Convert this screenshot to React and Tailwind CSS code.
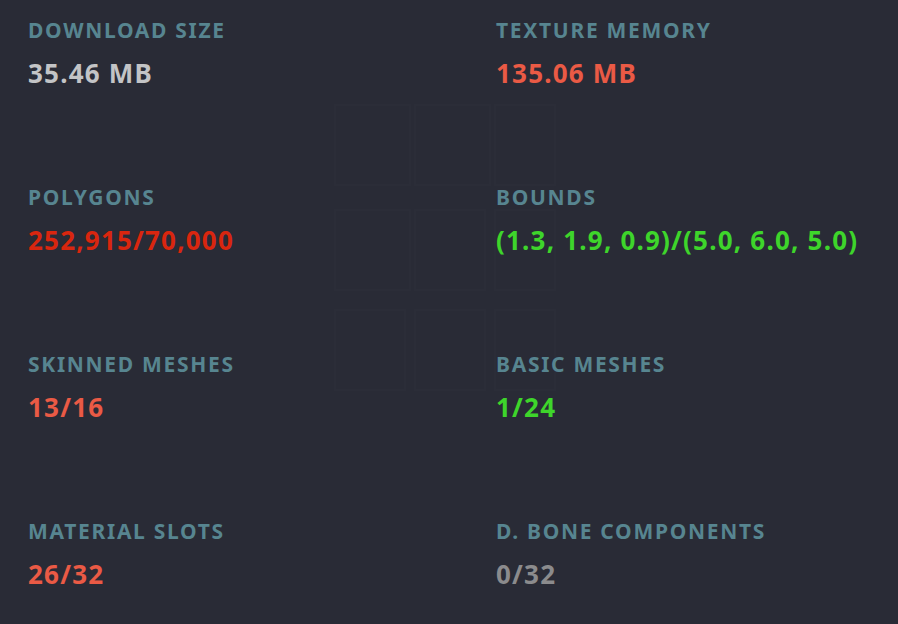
import React from 'react';

const stats = [
    { label: 'DOWNLOAD SIZE', value: '35.46 MB', color: 'text-[#c3c4c6]' },
    { label: 'TEXTURE MEMORY', value: '135.06 MB', color: 'text-[#ea5a45]' },
    { label: 'POLYGONS', value: '252,915/70,000', color: 'text-[#d9260f]' },
    { label: 'BOUNDS', value: '(1.3, 1.9, 0.9)/(5.0, 6.0, 5.0)', color: 'text-[#3ed52b]' },
    { label: 'SKINNED MESHES', value: '13/16', color: 'text-[#ea5a45]' },
    { label: 'BASIC MESHES', value: '1/24', color: 'text-[#3ed52b]' },
    { label: 'MATERIAL SLOTS', value: '26/32', color: 'text-[#ea5a45]' },
    { label: 'D. BONE COMPONENTS', value: '0/32', color: 'text-[#8b8b8d]' },
];

// faint watermark behind the stats
const Watermark = () => (
    <svg className="absolute left-[320px] top-[90px]" width="260" height="330" viewBox="0 0 260 330" fill="none" stroke="#2b2d38" strokeWidth="2">
        <rect x="15" y="15" width="75" height="80" />
        <rect x="95" y="15" width="75" height="80" />
        <rect x="175" y="15" width="60" height="80" />
        <rect x="15" y="120" width="75" height="80" />
        <rect x="95" y="120" width="70" height="80" />
        <rect x="175" y="120" width="60" height="80" />
        <rect x="15" y="220" width="70" height="80" />
        <rect x="95" y="220" width="70" height="80" />
        <rect x="175" y="220" width="60" height="80" />
    </svg>
);

export default function App() {
    return (
        <div className="relative w-[898px] h-[624px] overflow-hidden bg-[#292b36]" style={{ fontFamily: '"Noto Sans", "Open Sans", sans-serif' }}>
            <Watermark />
            <div className="relative grid grid-cols-[468px_1fr] auto-rows-[167px] pl-[28px] pt-[20px]">
                {stats.map((s) => (
                    <div key={s.label} className="flex flex-col gap-[21px]">
                        <div className="text-[21px] leading-[20px] font-bold tracking-[1.7px] text-[#578590]">{s.label}</div>
                        <div className={"text-[26px] leading-[25px] font-bold tracking-[1.2px] whitespace-nowrap " + s.color}>{s.value}</div>
                    </div>
                ))}
            </div>
        </div>
    );
}
